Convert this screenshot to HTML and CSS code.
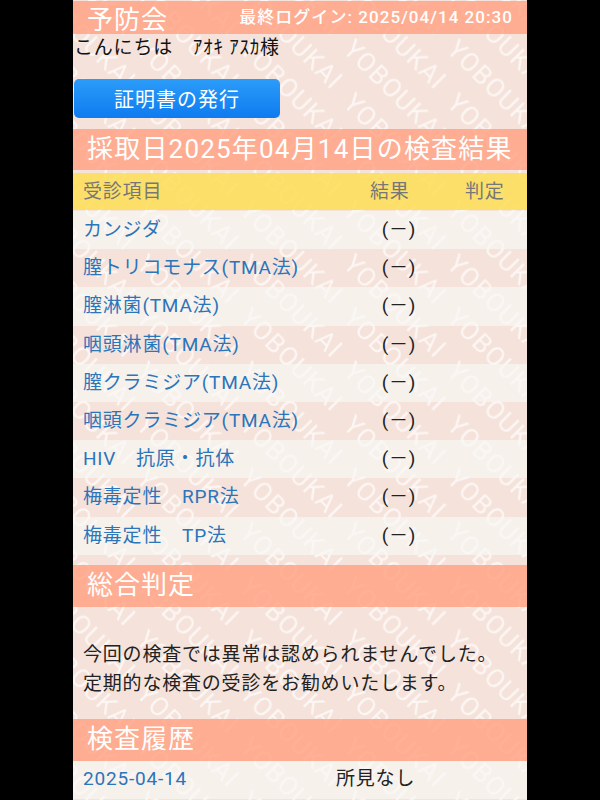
FILE: index.html
```html
<!DOCTYPE html>
<html lang="ja">
<head>
<meta charset="utf-8">
<title>予防会 検査結果</title>
<link rel="stylesheet" href="styles.css">
</head>
<body>
<main class="app">
  <svg class="watermark" aria-hidden="true" width="454" height="800">
    <defs>
      <text id="wm" class="wm-text" transform="rotate(45)">YOBOUKAI</text>
      <pattern id="wm-tile" patternUnits="userSpaceOnUse" x="62" y="-3" width="103.5" height="53.7">
        <use href="#wm" transform="translate(-103.5 53.7)"/>
        <use href="#wm" transform="translate(0 53.7)"/>
        <use href="#wm" transform="translate(103.5 53.7)"/>
        <use href="#wm" transform="translate(-103.5 0)"/>
        <use href="#wm"/>
        <use href="#wm" transform="translate(103.5 0)"/>
        <use href="#wm" transform="translate(-103.5 -53.7)"/>
        <use href="#wm" transform="translate(0 -53.7)"/>
        <use href="#wm" transform="translate(103.5 -53.7)"/>
        <use href="#wm" transform="translate(-103.5 -107.4)"/>
        <use href="#wm" transform="translate(0 -107.4)"/>
        <use href="#wm" transform="translate(103.5 -107.4)"/>
      </pattern>
    </defs>
    <rect class="wm-fill" width="454" height="800"/>
  </svg>
  <div class="content">
    <header class="topbar">
      <span class="brand">予防会</span>
      <span class="login">最終ログイン: 2025/04/14 20:30</span>
    </header>
    <p class="greeting">こんにちは　ｱｵｷ ｱｽｶ様</p>
    <button class="cert-btn" type="button">証明書の発行</button>
    <h2 class="heading result-heading">採取日2025年04月14日の検査結果</h2>
    <div class="table-head">
      <span>受診項目</span><span>結果</span><span>判定</span>
    </div>
    <ul class="results">
      <li class="row"><a class="link">カンジダ</a><span class="col-c">(－)</span><span></span></li>
      <li class="row"><a class="link">膣トリコモナス(TMA法)</a><span class="col-c">(－)</span><span></span></li>
      <li class="row"><a class="link">膣淋菌(TMA法)</a><span class="col-c">(－)</span><span></span></li>
      <li class="row"><a class="link">咽頭淋菌(TMA法)</a><span class="col-c">(－)</span><span></span></li>
      <li class="row"><a class="link">膣クラミジア(TMA法)</a><span class="col-c">(－)</span><span></span></li>
      <li class="row"><a class="link">咽頭クラミジア(TMA法)</a><span class="col-c">(－)</span><span></span></li>
      <li class="row"><a class="link">HIV　抗原・抗体</a><span class="col-c">(－)</span><span></span></li>
      <li class="row"><a class="link">梅毒定性　RPR法</a><span class="col-c">(－)</span><span></span></li>
      <li class="row"><a class="link">梅毒定性　TP法</a><span class="col-c">(－)</span><span></span></li>
    </ul>
    <h2 class="heading summary-heading">総合判定</h2>
    <p class="summary">今回の検査では異常は認められませんでした。<br>定期的な検査の受診をお勧めいたします。</p>
    <h2 class="heading">検査履歴</h2>
    <div class="history">
      <a class="link">2025-04-14</a><span class="finding">所見なし</span>
    </div>
  </div>
</main>
</body>
</html>
```
FILE: styles.css
```css
html, body {
  margin: 0;
  height: 800px;
  overflow: hidden;
  background: #000;
}
body {
  font-family: Roboto, "Noto Sans CJK JP", sans-serif;
  letter-spacing: 0.8px;
  color: #222;
  font-size: 19px;
}
.app {
  position: relative;
  width: 454px;
  height: 800px;
  margin: 0 auto;
  overflow: hidden;
  background: #f5e2da;
}
.watermark {
  position: absolute;
  top: 0;
  left: 0;
}
.wm-text {
  font-family: Roboto, sans-serif;
  font-size: 26px;
  letter-spacing: 1px;
  fill: #fff;
  fill-opacity: 0.7;
}
.wm-fill {
  fill: url(#wm-tile);
}
.content {
  position: relative;
  padding-top: 1px;
}
.topbar {
  display: flex;
  justify-content: space-between;
  align-items: center;
  height: 33px;
  padding: 0 14px;
  background: rgba(255, 163, 133, 0.85);
  color: #fff;
}
.brand {
  font-size: 26px;
  letter-spacing: 1px;
}
.login {
  font-size: 17px;
  font-weight: 500;
  letter-spacing: 1.05px;
  line-height: 1;
  margin-bottom: 1px;
}
.greeting {
  margin: 0;
  padding: 2px 0 0 1px;
  height: 43px;
  line-height: 24px;
  color: #111;
}
.cert-btn {
  display: block;
  width: 206px;
  height: 39px;
  margin: 0 0 11px 1px;
  border: 0;
  border-radius: 5px;
  background: linear-gradient(#2c9cf9, #0e7bf0);
  color: #fff;
  font: inherit;
  font-size: 20px;
  letter-spacing: 1px;
}
.heading {
  margin: 0;
  height: 42px;
  padding-left: 14px;
  background: rgba(255, 163, 133, 0.85);
  color: #fff;
  font-size: 26px;
  font-weight: 400;
  letter-spacing: 1px;
  line-height: 40px;
}
.result-heading {
  height: 41px;
  margin-bottom: 3px;
  letter-spacing: 1.2px;
}
.table-head {
  display: grid;
  grid-template-columns: 287px 95px 1fr;
  height: 37px;
  padding-left: 10px;
  line-height: 37px;
  background: rgba(252, 222, 95, 0.92);
  color: #777;
}
.results {
  list-style: none;
  margin: 1px 0 10px;
  padding: 0;
}
.row {
  display: grid;
  grid-template-columns: 271px 90px 1fr;
  height: 38.2px;
  padding-left: 10px;
  line-height: 37px;
}
.col-c {
  text-align: center;
}
.row:nth-child(odd) {
  background: rgba(247, 248, 244, 0.68);
}
.link {
  color: #2b75bb;
}
.summary {
  margin: 0;
  height: 112px;
  box-sizing: border-box;
  padding: 33px 0 0 10px;
  line-height: 29px;
  color: #222;
}
.history {
  display: grid;
  grid-template-columns: 253px 1fr;
  height: 38px;
  padding-left: 10px;
  line-height: 36px;
  background: rgba(247, 248, 244, 0.68);
}
```
